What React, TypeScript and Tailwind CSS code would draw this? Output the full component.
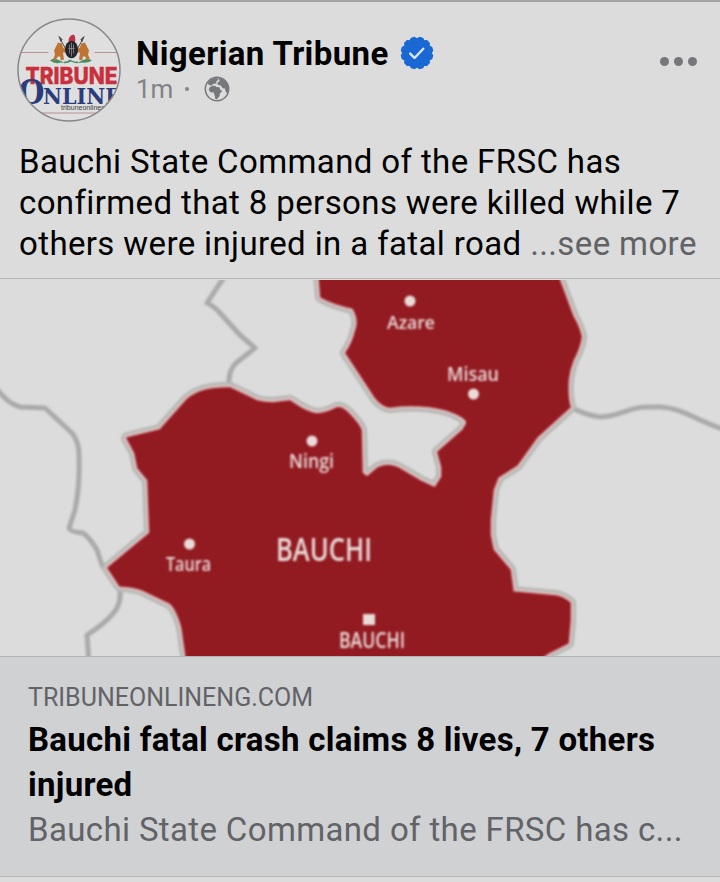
import React from 'react';

const badgePoints = Array.from({ length: 12 }, (_, i) => {
  const angle = i * 30;
  return [[angle, 13.9], [angle + 9, 15.7], [angle + 21, 15.7]]
    .map(([deg, r]) => {
      const rad = ((deg - 90) * Math.PI) / 180;
      return `${(17 + r * Math.cos(rad)).toFixed(2)},${(17 + r * Math.sin(rad)).toFixed(2)}`;
    })
    .join(" ");
}).join(" ");

const VerifiedBadge = () => (
  <svg width="34" height="34" viewBox="0 0 34 34">
    <polygon points={badgePoints} fill="#1968d3" stroke="#1968d3" strokeWidth="1.4" strokeLinejoin="round" />
    <path d="M10.2 17.6l4.3 4.4 8.800-9.300" fill="none" stroke="#dce6f2" strokeWidth="2.4" strokeLinecap="round" strokeLinejoin="round" />
  </svg>
);

const Globe = () => (
  <svg width="26" height="26" viewBox="0 0 26 26">
    <circle cx="13" cy="13" r="11.7" fill="#dcdcdc" stroke="#77787b" strokeWidth="1.5" />
    {/* Africa */}
    <path d="M5.500 11.500L7.800 10 11 9.800 12.500 11 15.500 11.300 16.300 13.800 18.200 15 15.800 17.800 15.600 20 13 23.200 11.300 22.800 10.700 19.500 9.600 16.600 6.500 16.300 4.800 14z" fill="#77787b" />
    {/* Europe */}
    <path d="M3.500 7.500C5.500 4 9 2 13 1.800l1.500 2-2.300 1.700.3 2-3 .3-1.500 1.400-2 .2z" fill="#77787b" />
    {/* Asia */}
    <path d="M14 1.700c4.500.3 7.800 3 9.500 6.600 1.300 3 1.300 6.200 0 9.200l-1.800-1.700-.8-3.300-2.200-.3-2-2.700-3-.7-.2-2.300 2.300-1.500z" fill="#77787b" />
  </svg>
);

const Avatar = () => (
  <svg width="104" height="104" viewBox="17 17.500 104 104" className="shrink-0">
    <defs>
      <clipPath id="avatar">
        <circle cx="69" cy="69.500" r="50.800" />
      </clipPath>
    </defs>
    <circle cx="69" cy="69.500" r="51" fill="#dfdfdf" />
    <g clipPath="url(#avatar)">
      <path d="M17 52h31.500M94.500 52H121M17 112.500h104" stroke="#b98f92" strokeWidth="1" />
      {/* Coat of arms */}
      <path d="M50 60q5-4 10 0 5 3 10-1 6 4 11 1 5-4 11 0-5 3-10 2-6 2-11-1-5 3-10 1-6 2-11-2z" fill="#4c8c62" />
      <path d="M56 58q5 1 8 4M86 58q-5 1-8 4" stroke="#dfe6df" strokeWidth="1" fill="none" />
      <path d="M60 38l7 13M83 38l-7 13" stroke="#514c4b" strokeWidth="1" />
      <path d="M59 36l3 3-1 2zM84 36l-3 3 1 2z" fill="#454b52" stroke="#454b52" strokeWidth="1" />
      <path d="M58 42l4 1 1 4 4 2-1 3-3 0 1 7-3 1-1-4-2 0-3 4-2-1 2-5-1-4 2-4z" fill="#bf7436" />
      <path d="M85 42l-4 1-1 4-4 2 1 3 3 0-1 7 3 1 1-4 2 0 3 4 2-1-2-5 1-4-2-4z" fill="#bf7436" />
      <path d="M68.500 41q0-6 5-7 2.500 1 1.500 9z" fill="#bd3446" />
      <ellipse cx="71.500" cy="49" rx="6.500" ry="8.800" fill="#25252a" />
      <path d="M71.500 42v14M68.500 48h6M69.500 44v9M73.500 44v9" stroke="#9b9da2" strokeWidth=".7" />
      <text x="25.500" y="83" fontFamily="Inter, sans-serif" fontWeight="800" fontSize="22.500" textLength="92" lengthAdjust="spacingAndGlyphs" fill="#c9303c" stroke="#c9303c" strokeWidth=".4">TRIBUNE</text>
      <text x="18.500" y="103" fontFamily="'DejaVu Serif', serif" fontWeight="700" fontSize="33" textLength="26" lengthAdjust="spacingAndGlyphs" fill="#2b3c7e">O</text>
      <text x="43" y="103" fontFamily="'DejaVu Serif', serif" fontWeight="700" fontSize="22" textLength="78" lengthAdjust="spacingAndGlyphs" fill="#2b3c7e">NLINE</text>
      <text x="61" y="109" fontFamily="'Liberation Sans', sans-serif" fontSize="6.500" textLength="48" lengthAdjust="spacingAndGlyphs" fill="#3c3c40">tribuneonlineng</text>
    </g>
    <circle cx="69" cy="69.500" r="51" fill="none" stroke="#88888a" strokeWidth="1.500" />
  </svg>
);

const statePath =
  "M319 274L321 297Q334 304 353 308Q360 320 356 330Q353 343 346 353L360 374L375 397Q382 406 390 407Q420 403 447 410Q467 417 467 423L463 430L438 452Q440 460 442 467V477L435 488L420 481L398 468Q388 463 378 468L367 477L362 473L361 430Q359 424 347 412Q341 407 337 408Q325 414 317 414C308 413 299 407 290 401Q281 402 273 403Q265 403 257 401L230 388Q210 388 200 392Q190 396 185 402L160 430L127 438L135 453L138 468L148 480L150 533L108 568L120 586Q132 586 143 590L170 603Q177 609 182 627L187 662H535L550 652L568 643L570 620V603Q563 597 555 596L513 592L510 570L493 550L490 535V520L493 490L498 477L517 465L537 437L570 407Q567 398 568 380Q569 370 573 360Q580 347 581 337Q579 327 573 317L557 274Z";

const towns = [
  { name: "Azare", x: 387, y: 329, width: 48, size: 18, dotX: 410, dotY: 301 },
  { name: "Misau", x: 447, y: 381, width: 52, size: 19, dotX: 473.5, dotY: 394 },
  { name: "Ningi", x: 289, y: 468, width: 45, size: 20, dotX: 312, dotY: 441 },
  { name: "Taura", x: 166, y: 571, width: 45, size: 19, dotX: 189.5, dotY: 544 },
];

const StateMap = () => (
  <svg width="720" height="376" viewBox="0 280 720 376" className="block">
    <rect y="280" width="720" height="376" fill="#dcdcdc" />
    <g className="blur-[0.9px]">
      <g fill="none" stroke="#aaaaac" strokeWidth="5" strokeLinejoin="round">
        <path d="M226 274L207 303Q214 306 220 313L240 335L255 348L236 363Q228 371 229 384" />
        <path d="M-4 388Q8 404 20 407L45 408L72 433Q80 443 79 460Q80 485 75 510L69 528Q70 532 83 533Q90 538 97 550L102 565L120 590Q121 600 117 608Q110 620 87 635L89 662" />
        <path d="M568 406Q585 415 600 417C622 416 628 407 647 407H661C682 408 699 422 726 430" />
      </g>
      <path d={statePath} fill="none" stroke="#b5b6b3" strokeWidth="12" strokeLinejoin="round" />
      <path d={statePath} fill="none" stroke="#d4c3c1" strokeWidth="7" strokeLinejoin="round" />
      <path d={statePath} fill="#921a21" stroke="#a01924" strokeWidth="1.500" />
      <g fill="#eadbd9" fontFamily="'Open Sans', sans-serif">
        {towns.map((town) => (
          <React.Fragment key={town.name}>
            <circle cx={town.dotX} cy={town.dotY} r="5.500" />
            <text x={town.x} y={town.y} fontSize={town.size} fontWeight="600" textLength={town.width} lengthAdjust="spacingAndGlyphs">
              {town.name}
            </text>
          </React.Fragment>
        ))}
        <rect x="363" y="614" width="12" height="11" />
        <text x="276" y="561" fontSize="32" fontWeight="600" textLength="96" lengthAdjust="spacingAndGlyphs">BAUCHI</text>
        <text x="339" y="648" fontSize="22" fontWeight="600" textLength="66" lengthAdjust="spacingAndGlyphs">BAUCHI</text>
      </g>
    </g>
  </svg>
);

const App = () => {
  return (
    <div className="w-[720px] h-[882px] overflow-hidden flex flex-col bg-[#dcdcdc] border-t-2 border-[#a4a4a5] font-['Roboto',sans-serif] text-black">
      {/* Post header */}
      <header className="h-[136px] shrink-0 flex items-start pl-[17px] pr-[23px] pt-[15.5px]">
        <Avatar />
        <div className="flex-1 pl-[15px] pt-[16px]">
          <div className="flex items-center h-[39px]">
            <h1 className="pt-[2px] text-[33px] leading-[40px] font-bold whitespace-nowrap tracking-[0.38px]">Nigerian Tribune</h1>
            <div className="ml-[11px]"><VerifiedBadge /></div>
          </div>
          <div className="flex items-center h-[32px] text-[#828386] text-[26px] leading-[32px]">
            <span>1m</span>
            <span className="w-[4px] h-[4px] rounded-full bg-[#828386] ml-[12px] mr-[15px]" />
            <Globe />
          </div>
        </div>
        <div className="flex gap-[5px] pt-[39.5px]">
          <span className="w-[9px] h-[9px] rounded-full bg-[#77777b]" />
          <span className="w-[9px] h-[9px] rounded-full bg-[#77777b]" />
          <span className="w-[9px] h-[9px] rounded-full bg-[#77777b]" />
        </div>
      </header>

      <p className="h-[140px] shrink-0 pl-[19px] pt-[3px] text-[33px] leading-[41px] whitespace-nowrap tracking-[0.38px]">
        <span className="block">Bauchi State Command of the FRSC has</span>
        <span className="block">confirmed that 8 persons were killed while 7</span>
        <span className="block">others were injured in a fatal road <span className="text-[#626367]">...see more</span></span>
      </p>

      <div className="shrink-0 border-t border-[#b9b9ba] pt-px">
        <StateMap />
      </div>

      {/* Link preview */}
      <div className="h-[221px] shrink-0 bg-[#d0d1d3] border-y border-[#b3b4b5] pl-[28px] pt-[25px] whitespace-nowrap">
        <div className="text-[25px] leading-[32px] text-[#626367]">TRIBUNEONLINENG.COM</div>
        <h2 className="pt-[3px] text-[33px] leading-[45px] font-bold tracking-[0.27px]">
          <span className="block">Bauchi fatal crash claims 8 lives, 7 others</span>
          <span className="block">injured</span>
        </h2>
        <div className="text-[33px] leading-[45px] text-[#626367] tracking-[0.36px]">Bauchi State Command of the FRSC has c...</div>
      </div>
    </div>
  );
};

export default App;
